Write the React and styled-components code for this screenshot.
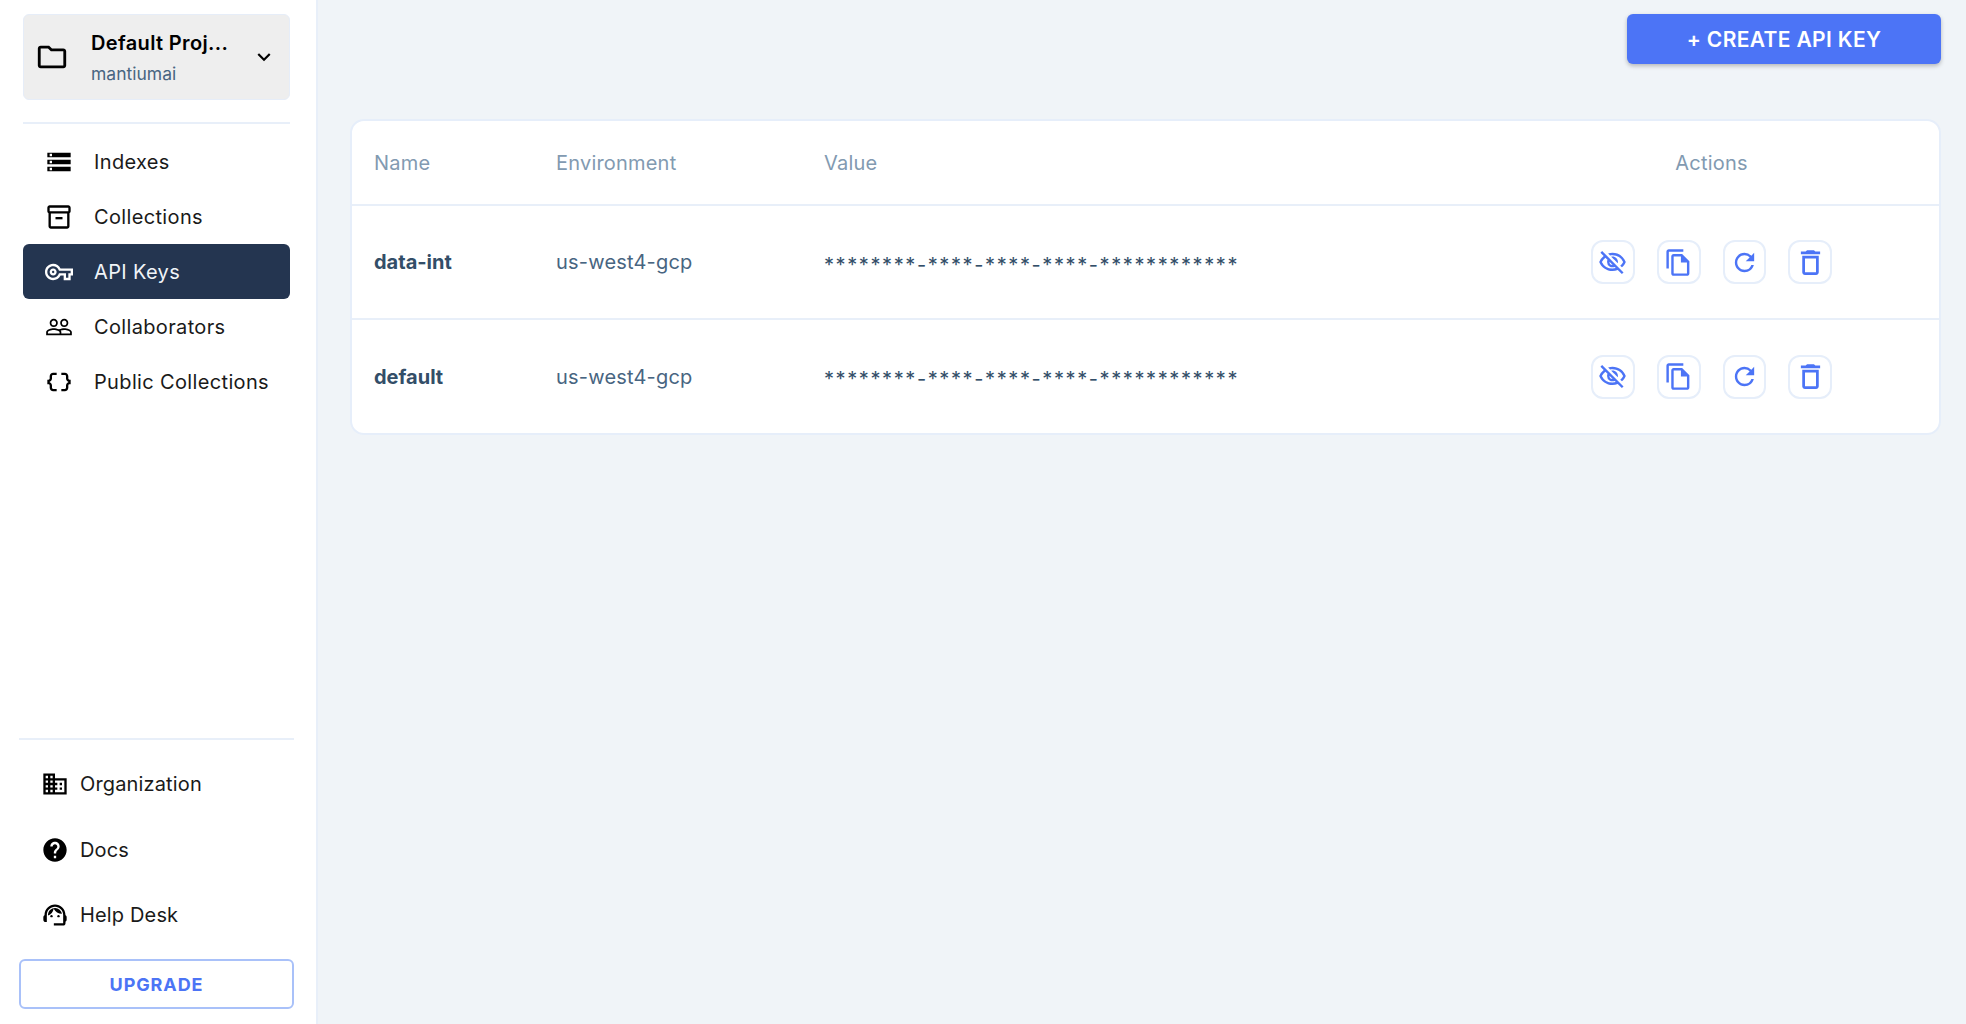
import React from "react";
import styled, { createGlobalStyle } from "styled-components";
import {
  MdStorage,
  MdOutlineInventory2,
  MdOutlineVpnKey,
  MdPeopleOutline,
  MdDataObject,
  MdOutlineFolder,
  MdKeyboardArrowDown,
  MdBusiness,
  MdHelp,
  MdSupportAgent,
  MdOutlineVisibilityOff,
  MdOutlineFileCopy,
  MdRefresh,
  MdOutlineDelete,
} from "react-icons/md";

const navItems = [
  { label: "Indexes", Icon: MdStorage },
  { label: "Collections", Icon: MdOutlineInventory2 },
  { label: "API Keys", Icon: MdOutlineVpnKey, active: true },
  { label: "Collaborators", Icon: MdPeopleOutline },
  { label: "Public Collections", Icon: MdDataObject },
];

const footerItems = [
  { label: "Organization", Icon: MdBusiness },
  { label: "Docs", Icon: MdHelp },
  { label: "Help Desk", Icon: MdSupportAgent },
];

const keys = [
  { name: "data-int", env: "us-west4-gcp" },
  { name: "default", env: "us-west4-gcp" },
];

const actions = [
  { Icon: MdOutlineVisibilityOff, size: 29 },
  { Icon: MdOutlineFileCopy, size: 29 },
  { Icon: MdRefresh, size: 29 },
  { Icon: MdOutlineDelete, size: 33 },
];

const App = () => {
  return (
    <>
      <GlobalStyle />
      <Page>
        <Sidebar>
          <ProjectCard>
            <MdOutlineFolder size={34} color="#000" />
            <ProjectText>
              <ProjectName>Default Proj...</ProjectName>
              <ProjectOrg>mantiumai</ProjectOrg>
            </ProjectText>
            <MdKeyboardArrowDown size={26} color="#000" />
          </ProjectCard>
          <TopDivider />
          <Nav>
            {navItems.map(({ label, Icon, active }) => (
              <NavItem key={label} $active={active}>
                <Icon size={28} />
                {label}
              </NavItem>
            ))}
          </Nav>
          <Footer>
            <BottomDivider />
            {footerItems.map(({ label, Icon }) => (
              <FooterItem key={label}>
                <Icon size={28} />
                {label}
              </FooterItem>
            ))}
            <UpgradeButton>UPGRADE</UpgradeButton>
          </Footer>
        </Sidebar>
        <Main>
          <Toolbar>
            <CreateButton>+ CREATE API KEY</CreateButton>
          </Toolbar>
          <TableCard>
            <HeaderRow>
              <HeadCell>Name</HeadCell>
              <HeadCell>Environment</HeadCell>
              <HeadCell>Value</HeadCell>
              <ActionsHead>Actions</ActionsHead>
            </HeaderRow>
            {keys.map((key) => (
              <Row key={key.name}>
                <NameCell>{key.name}</NameCell>
                <Cell>{key.env}</Cell>
                <ValueCell>********-****-****-****-************</ValueCell>
                <Actions>
                  {actions.map(({ Icon, size }, i) => (
                    <IconButton key={i}>
                      <Icon size={size} />
                    </IconButton>
                  ))}
                </Actions>
              </Row>
            ))}
          </TableCard>
        </Main>
      </Page>
    </>
  );
};

export default App;

const GlobalStyle = createGlobalStyle`
  html, body {
    margin: 0;
    padding: 0;
    background: #f0f4f8;
  }
  * {
    box-sizing: border-box;
  }
  body {
    font-family: Inter, "Liberation Sans", sans-serif;
  }
`;

const Page = styled.div`
  display: flex;
  width: 100vw;
  height: 100vh;
  overflow: hidden;
`;

const Sidebar = styled.aside`
  width: 318px;
  flex-shrink: 0;
  height: 100%;
  background: #fff;
  border-right: 2px solid #e8eff9;
  padding: 14px 0 15px;
  display: flex;
  flex-direction: column;
`;

const ProjectCard = styled.div`
  margin: 0 26px 0 23px;
  height: 86px;
  background: #eeeeee;
  border: 1px solid #e6edf8;
  border-radius: 6px;
  display: flex;
  align-items: center;
  padding: 0 12px 0 11px;
`;

const ProjectText = styled.div`
  flex: 1;
  margin-left: 22px;
`;

const ProjectName = styled.div`
  font-size: 20px;
  font-weight: 600;
  line-height: 28px;
  letter-spacing: 0.35px;
  color: #000;
`;

const ProjectOrg = styled.div`
  font-size: 17.5px;
  line-height: 24px;
  margin-top: 5px;
  color: #486581;
`;

const TopDivider = styled.div`
  margin: 22px 26px 0 23px;
  height: 2px;
  background: #e8eff9;
`;

const Nav = styled.nav`
  margin: 10px 26px 0 23px;
  display: flex;
  flex-direction: column;
`;

const NavItem = styled.div`
  height: 55px;
  display: flex;
  align-items: center;
  gap: 21px;
  padding-left: 22px;
  border-radius: 6px;
  font-size: 20px;
  letter-spacing: 0.35px;
  color: ${(p) => (p.$active ? "#f0f4f8" : "#1a1a1a")};
  background: ${(p) => (p.$active ? "#243550" : "transparent")};

  svg {
    color: ${(p) => (p.$active ? "#fff" : "#000")};
    flex-shrink: 0;
  }
`;

const Footer = styled.div`
  margin-top: auto;
  display: flex;
  flex-direction: column;
  padding: 0 22px 0 19px;
`;

const BottomDivider = styled.div`
  height: 2px;
  background: #e8eff9;
  margin-bottom: 11.5px;
`;

const FooterItem = styled.div`
  height: 65.5px;
  display: flex;
  align-items: center;
  gap: 11px;
  padding-left: 22px;
  font-size: 20px;
  letter-spacing: 0.15px;
  color: #1a1a1a;

  svg {
    color: #000;
    flex-shrink: 0;
  }
`;

const UpgradeButton = styled.button`
  margin-top: 11px;
  height: 50px;
  background: #fff;
  border: 2px solid #a9c1f9;
  border-radius: 6px;
  font-family: inherit;
  font-size: 18px;
  font-weight: 700;
  letter-spacing: 0.9px;
  color: #4c74f5;
`;

const Main = styled.main`
  flex: 1;
  padding: 14px 25px 0 32px;
  display: flex;
  flex-direction: column;
`;

const Toolbar = styled.div`
  display: flex;
  justify-content: flex-end;
`;

const CreateButton = styled.button`
  width: 314px;
  height: 50px;
  background: #4c74f6;
  border: none;
  border-radius: 6px;
  box-shadow: 0 2px 4px rgba(0, 0, 0, 0.25);
  font-family: inherit;
  font-size: 21px;
  font-weight: 600;
  letter-spacing: 0.35px;
  color: #fff;
`;

const TableCard = styled.section`
  margin-top: 55px;
  background: #fff;
  border: 2px solid #e6eefa;
  border-radius: 14px;
`;

const columns = "182px 268px 767px 241px";

const HeaderRow = styled.div`
  display: grid;
  grid-template-columns: ${columns};
  align-items: center;
  height: 85px;
  padding-left: 22px;
  border-bottom: 2px solid #e8eff9;
`;

const HeadCell = styled.div`
  font-size: 20px;
  letter-spacing: 0.2px;
  color: #829ab1;
`;

const ActionsHead = styled(HeadCell)`
  text-align: center;
`;

const Row = styled.div`
  display: grid;
  grid-template-columns: ${columns};
  align-items: center;
  height: 114px;
  padding-left: 22px;
  border-bottom: 2px solid #e8eff9;

  &:last-child {
    border-bottom: none;
    height: 113px;
  }
`;

const Cell = styled.div`
  font-size: 20px;
  letter-spacing: 0.2px;
  color: #486581;
`;

const NameCell = styled(Cell)`
  font-weight: 700;
  letter-spacing: 0;
  color: #334e68;
`;

const ValueCell = styled(Cell)`
  padding-top: 5px;
  letter-spacing: 1.6px;
  color: #334e68;
`;

const Actions = styled.div`
  display: flex;
  gap: 22px;
`;

const IconButton = styled.button`
  width: 44px;
  height: 44px;
  padding: 0;
  display: flex;
  align-items: center;
  justify-content: center;
  background: #fff;
  border: 2px solid #e6eefa;
  border-radius: 12px;
  color: #4c74f6;
`;
